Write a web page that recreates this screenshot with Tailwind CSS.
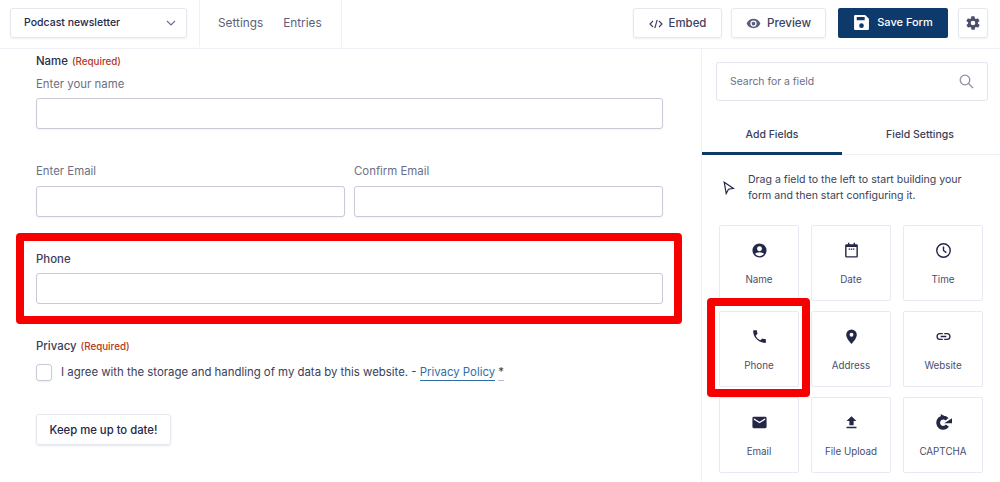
<!DOCTYPE html>
<html lang="en">
<head>
  <meta charset="UTF-8">
  <title>Form editor</title>
  <script src="https://cdn.jsdelivr.net/npm/@tailwindcss/browser@4"></script>
</head>
<body class="bg-white font-['Inter',sans-serif] text-[#242748] overflow-hidden">
<div class="relative w-[1000px] h-[482px] overflow-hidden">

  <!-- top bar -->
  <header class="flex items-center h-[49px] border-b border-[#f0f1f6] pl-[10px] pr-[12px]">
    <div class="w-[177px] h-[30px] -mt-[2px] flex items-center justify-between pl-[13px] pr-[10px] border border-[#e6e8f0] rounded-[3px] shadow-[0_1px_2px_rgba(40,50,90,0.08)] text-[10.500px] font-medium">
      Podcast newsletter
      <svg class="w-[10px] h-[6px]" viewBox="0 0 10 6" fill="none" stroke="#6b7090" stroke-width="1.2"><path d="M1 1l4 4 4-4"/></svg>
    </div>
    <nav class="ml-[12px] h-full w-[143px] flex items-center gap-[20px] pl-[18px] pt-[1px] border-x border-[#f0f1f6] text-[11.800px] text-[#5b5f7b] -mt-[2px]">
      <span>Settings</span><span>Entries</span>
    </nav>
    <div class="ml-auto flex items-center -mt-[2px]">
      <button class="w-[89px] h-[30px] pt-[1px] flex items-center justify-center gap-[6px] border border-[#e6e8f0] rounded-[3px] shadow-[0_1px_2px_rgba(40,50,90,0.08)] text-[11.400px] font-medium text-[#3e4260]">
        <svg class="w-[14px] h-[10px]" viewBox="0 0 14 10" fill="none" stroke="#3e4260" stroke-width="1.2"><path d="M4 2L1 5l3 3M10 2l3 3-3 3M8.2 .8L5.8 9.2"/></svg>
        Embed
      </button>
      <button class="ml-[9px] w-[95px] h-[30px] pt-[1px] flex items-center justify-center gap-[6px] border border-[#e6e8f0] rounded-[3px] shadow-[0_1px_2px_rgba(40,50,90,0.08)] text-[11.600px] font-medium text-[#3e4260]">
        <svg class="w-[15px] h-[15px]" viewBox="0 0 24 24" fill="#5b5f7b"><path d="M12 4.500C7 4.500 2.700 7.600 1 12c1.700 4.400 6 7.500 11 7.500s9.300-3.100 11-7.500c-1.700-4.400-6-7.500-11-7.500zm0 12.500a5 5 0 110-10 5 5 0 010 10zm0-8a3 3 0 100 6 3 3 0 000-6z"/></svg>
        Preview
      </button>
      <button class="ml-[12px] w-[110px] h-[30px] pb-[1px] flex items-center justify-center gap-[7px] bg-[#0e3a6b] rounded-[2px] text-[11px] font-medium text-white">
        <svg class="w-[17px] h-[17px]" viewBox="0 0 16 16" fill="#fff"><path fill-rule="evenodd" d="M2 1h9.500L15 4.500V14a1 1 0 01-1 1H2a1 1 0 01-1-1V2a1 1 0 011-1zm1.500 1.800v3h7.500v-3H3.500zM8 8.800a2.200 2.200 0 100 4.400 2.200 2.200 0 000-4.400z"/></svg>
        Save Form
      </button>
      <button class="ml-[10px] w-[30px] h-[30px] flex items-center justify-center border border-[#e6e8f0] rounded-[3px] shadow-[0_1px_2px_rgba(40,50,90,0.08)]">
        <svg class="w-[16px] h-[16px]" viewBox="0 0 24 24" fill="#4a4e6a"><path d="M19.400 13a7.500 7.500 0 000-2l2.100-1.600a.5.5 0 00.1-.6l-2-3.500a.5.5 0 00-.6-.2l-2.500 1a7.300 7.300 0 00-1.700-1l-.4-2.600a.5.5 0 00-.5-.5h-4a.5.5 0 00-.5.4l-.4 2.700a7.700 7.700 0 00-1.700 1l-2.500-1a.5.5 0 00-.6.2l-2 3.500a.5.5 0 00.1.6L4.600 11a7.500 7.500 0 000 2l-2.100 1.600a.5.5 0 00-.1.6l2 3.500c.1.200.4.300.6.200l2.500-1c.5.400 1.100.7 1.700 1l.4 2.600c0 .3.200.5.500.5h4c.3 0 .5-.2.5-.4l.4-2.700c.6-.3 1.200-.6 1.700-1l2.500 1c.2.100.5 0 .6-.2l2-3.500a.5.5 0 00-.1-.6L19.400 13zM12 15.500a3.500 3.500 0 110-7 3.500 3.500 0 010 7z"/></svg>
      </button>
    </div>
  </header>

  <div class="flex h-[433px]">
    <!-- form preview -->
    <main class="w-[702px] shrink-0 border-r border-[#f0f1f6] pl-[36px] pr-[38px] pt-[5px] text-[11.400px]">
      <div class="h-[15px] leading-[15px] flex items-center gap-[4px]">
        <span class="font-medium text-[#2a2e4a]">Name</span>
        <span class="text-[9.800px] font-medium text-[#b5371c]">(Required)</span>
      </div>
      <p class="mt-[8px] h-[15px] leading-[15px] text-[#6b6f85]">Enter your name</p>
      <div class="mt-[6px] h-[31px] border border-[#c8cad8] rounded-[3px] shadow-[0_1px_2px_rgba(40,50,90,0.06)]"></div>

      <div class="mt-[35px] grid grid-cols-2 gap-[9px]">
        <div>
          <p class="h-[15px] leading-[15px] text-[#6b6f85]">Enter Email</p>
          <div class="mt-[7px] h-[31px] border border-[#c8cad8] rounded-[3px] shadow-[0_1px_2px_rgba(40,50,90,0.06)]"></div>
        </div>
        <div>
          <p class="h-[15px] leading-[15px] text-[#6b6f85]">Confirm Email</p>
          <div class="mt-[7px] h-[31px] border border-[#c8cad8] rounded-[3px] shadow-[0_1px_2px_rgba(40,50,90,0.06)]"></div>
        </div>
      </div>

      <p class="mt-[35px] h-[15px] leading-[15px] font-medium text-[#3a3e58]">Phone</p>
      <div class="mt-[6px] h-[31px] border border-[#c8cad8] rounded-[3px]"></div>

      <div class="mt-[35px] h-[15px] leading-[15px] flex items-center gap-[4px]">
        <span class="font-medium text-[#3a3e58]">Privacy</span>
        <span class="text-[9.800px] font-medium text-[#b5371c]">(Required)</span>
      </div>
      <div class="mt-[10px] flex items-center h-[17px]">
        <span class="w-[16px] h-[17px] border border-[#c8cad8] rounded-[3px] shadow-[0_1px_2px_rgba(40,50,90,0.08)]"></span>
        <span class="ml-[9px] text-[#3a3e58]">I agree with the storage and handling of my data by this website. - <a class="text-[#2f6ea5] border-b border-[#2f6ea5] pb-[1px]">Privacy Policy</a> <span class="border-b border-[#b8bac8] pb-[1px]">*</span></span>
      </div>
      <button class="mt-[33px] w-[135px] h-[31px] pt-[1px] border border-[#e6e8f0] rounded-[3px] shadow-[0_1px_2px_rgba(40,50,90,0.12)] text-[11.300px] font-medium text-[#242748]">Keep me up to date!</button>
    </main>

    <!-- sidebar -->
    <aside class="flex-1 min-w-0">
      <div class="mx-[12px] ml-[14px] mt-[13px] h-[39px] flex items-center justify-between pl-[13px] pr-[13px] border border-[#e3e4ee] rounded-[3px] text-[10.400px] text-[#6b6f85]">
        Search for a field
        <svg class="w-[15px] h-[15px]" viewBox="0 0 15 15" fill="none" stroke="#8d90a6" stroke-width="1.300"><circle cx="6" cy="6" r="4.800"/><path d="M9.500 9.500l4.500 4.500"/></svg>
      </div>
      <div class="mt-[19px] flex h-[35px] border-b border-[#f0f1f6] text-[10.500px] text-[#3a3e58]">
        <div class="w-[140px] h-[35px] text-center leading-[29px] font-medium border-b-[3px] border-[#0e3a6b]">Add Fields</div>
        <div class="w-[156px] text-center leading-[29px] font-medium">Field Settings</div>
      </div>
      <div class="mt-[17px] ml-[21px] flex items-center text-[10.560px] leading-[15.500px] text-[#3a3e58]">
        <svg class="w-[12px] h-[14px] shrink-0" viewBox="0 0 12 14" fill="none" stroke="#242748" stroke-width="1.200"><path d="M1.200 1.200l2 11.300 2.300-4.300 5-.8z"/></svg>
        <p class="ml-[13px] w-[235px]">Drag a field to the left to start building your form and then start configuring it.</p>
      </div>
      <div class="mt-[22px] ml-[17px] w-[264px] grid grid-cols-3 gap-x-[12px] gap-y-[10px] text-[9.800px] text-[#4a4e6a]">
        <div class="h-[76px] border border-[#e8e9f2] rounded-[2px] flex flex-col items-center pt-[16px] gap-[14px]">
          <svg class="w-[17px] h-[17px]" viewBox="0 0 24 24" fill="#242748"><path d="M12 2a10 10 0 100 20 10 10 0 000-20zm0 4a3.500 3.500 0 110 7 3.500 3.500 0 010-7zm0 14a8 8 0 01-6.200-3c.8-1.700 3.400-2.700 6.200-2.700s5.400 1 6.200 2.700A8 8 0 0112 20z"/></svg>
          <span>Name</span>
        </div>
        <div class="h-[76px] border border-[#e8e9f2] rounded-[2px] flex flex-col items-center pt-[16px] gap-[14px]">
          <svg class="w-[17px] h-[17px]" viewBox="0 0 24 24" fill="#242748"><path fill-rule="evenodd" d="M7 1h2v2h6V1h2v2h2a2 2 0 012 2v15a2 2 0 01-2 2H5a2 2 0 01-2-2V5a2 2 0 012-2h2V1zM5 7v13h14V7H5zm3 2h2v2H8V9zm3 0h2v2h-2V9zm3 0h2v2h-2V9z"/></svg>
          <span>Date</span>
        </div>
        <div class="h-[76px] border border-[#e8e9f2] rounded-[2px] flex flex-col items-center pt-[16px] gap-[14px]">
          <svg class="w-[17px] h-[17px]" viewBox="0 0 24 24" fill="none" stroke="#242748" stroke-width="2"><circle cx="12" cy="12" r="9.500"/><path d="M12 6.500V12l4 3"/></svg>
          <span>Time</span>
        </div>
        <div class="h-[76px] border border-[#e8e9f2] rounded-[2px] flex flex-col items-center pt-[16px] gap-[14px]">
          <svg class="w-[17px] h-[17px]" viewBox="0 0 24 24" fill="#242748"><path d="M6.600 10.800c1.400 2.800 3.800 5.100 6.600 6.600l2.200-2.200c.3-.3.700-.4 1-.2 1.100.4 2.300.6 3.600.6.600 0 1 .4 1 1V20c0 .6-.4 1-1 1C10.600 21 3 13.400 3 4c0-.6.400-1 1-1h3.500c.6 0 1 .4 1 1 0 1.300.2 2.500.6 3.600.1.300 0 .7-.2 1l-2.300 2.200z"/></svg>
          <span>Phone</span>
        </div>
        <div class="h-[76px] border border-[#e8e9f2] rounded-[2px] flex flex-col items-center pt-[16px] gap-[14px]">
          <svg class="w-[17px] h-[17px]" viewBox="0 0 24 24" fill="#242748"><path d="M12 2a7.500 7.500 0 00-7.500 7.500C4.500 15 12 22.500 12 22.500S19.500 15 19.500 9.500A7.500 7.500 0 0012 2zm0 10.200a2.700 2.700 0 110-5.400 2.700 2.700 0 010 5.400z"/></svg>
          <span>Address</span>
        </div>
        <div class="h-[76px] border border-[#e8e9f2] rounded-[2px] flex flex-col items-center pt-[16px] gap-[14px]">
          <svg class="w-[17px] h-[17px]" viewBox="0 0 24 24" fill="#242748"><path d="M3.900 12A3.100 3.100 0 017 8.900h4V7H7a5 5 0 000 10h4v-1.900H7A3.100 3.100 0 013.900 12zM8 13h8v-2H8v2zm9-6h-4v1.900h4a3.100 3.100 0 010 6.200h-4V17h4a5 5 0 000-10z"/></svg>
          <span>Website</span>
        </div>
        <div class="h-[76px] border border-[#e8e9f2] rounded-[2px] flex flex-col items-center pt-[16px] gap-[14px]">
          <svg class="w-[17px] h-[17px]" viewBox="0 0 24 24" fill="#242748"><path d="M20 4H4a2 2 0 00-2 2v12a2 2 0 002 2h16a2 2 0 002-2V6a2 2 0 00-2-2zm0 4l-8 5-8-5V6l8 5 8-5v2z"/></svg>
          <span>Email</span>
        </div>
        <div class="h-[76px] border border-[#e8e9f2] rounded-[2px] flex flex-col items-center pt-[16px] gap-[14px]">
          <svg class="w-[17px] h-[17px]" viewBox="0 0 24 24" fill="#242748"><path d="M9 16h6v-6h4l-7-7-7 7h4v6zm-4 2h14v2H5v-2z"/></svg>
          <span>File Upload</span>
        </div>
        <div class="h-[76px] border border-[#e8e9f2] rounded-[2px] flex flex-col items-center pt-[16px] gap-[14px]">
          <svg class="w-[17px] h-[17px]" viewBox="0 0 24 24"><path d="M17 7.500A7.200 7.200 0 1 0 17.500 16.500" fill="none" stroke="#242748" stroke-width="5.500"/><path d="M13 13h11V6zM8 0l7 4-6 4z" fill="#242748"/></svg>
          <span>CAPTCHA</span>
        </div>
        <div class="h-[76px] border border-[#e8e9f2] rounded-[2px]"></div>
        <div class="h-[76px] border border-[#e8e9f2] rounded-[2px]"></div>
        <div class="h-[76px] border border-[#e8e9f2] rounded-[2px]"></div>
      </div>
    </aside>
  </div>

  <!-- red highlight boxes drawn over the shot -->
  <div class="absolute left-[16px] top-[233px] w-[666px] h-[91px] border-[8px] border-[#f60000] rounded-[4px] pointer-events-none"></div>
  <div class="absolute left-[707px] top-[298px] w-[103px] h-[99px] border-[8px] border-[#f60000] rounded-[4px] pointer-events-none"></div>
</div>
</body>
</html>
